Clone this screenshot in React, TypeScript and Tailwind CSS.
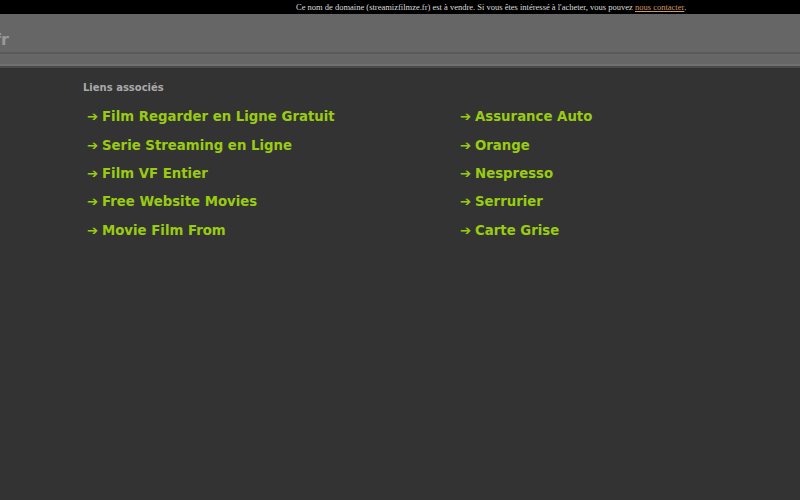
import React from 'react';

const leftLinks = [
  'Film Regarder en Ligne Gratuit',
  'Serie Streaming en Ligne',
  'Film VF Entier',
  'Free Website Movies',
  'Movie Film From',
];

const rightLinks = ['Assurance Auto', 'Orange', 'Nespresso', 'Serrurier', 'Carte Grise'];

function LinkItem({ label }: { label: string }) {
  return (
    <li className="h-[28.4px] flex items-center">
      <a href="#" className="flex items-center text-[13.3px] font-bold text-[#99cc11] no-underline">
        <span className="w-[15px] pl-[4px]">➔</span>
        <span className="pl-[4px]">{label}</span>
      </a>
    </li>
  );
}

export default function App() {
  return (
    <div className="w-[800px] h-[500px] bg-[#333333] overflow-hidden font-['DejaVu_Sans',sans-serif]">
      {/* sale notice */}
      <div className="h-[14px] bg-black flex items-center pl-[296px] text-[8.5px] leading-none text-[#dddddd] font-['Liberation_Serif',serif] whitespace-nowrap">
        Ce nom de domaine (streamizfilmze.fr) est à vendre. Si vous êtes intéressé à l'acheter, vous pouvez&nbsp;
        <a href="#" className="underline text-[#cc9966]">nous contacter</a>.
      </div>

      {/* header */}
      <div className="h-[38px] bg-[#666666] overflow-hidden flex items-end pb-[4px]">
        <span className="ml-[-6px] text-[16px] font-bold text-[#999999] leading-none">fr</span>
      </div>
      <div className="h-[2px] bg-[#5a5a5a]" />
      <div className="h-[10px] bg-[#666666]" />
      <div className="h-[2px] bg-[#707070]" />
      <div className="h-[2px] bg-[#4a4a4a]" />

      {/* related links */}
      <div className="pl-[83px] pt-[15px]">
        <h2 className="text-[10px] font-bold text-[#aaaaaa] leading-none">Liens associés</h2>
        <div className="flex mt-[10px]">
          <ul className="w-[373px]">
            {leftLinks.map((l) => (
              <LinkItem key={l} label={l} />
            ))}
          </ul>
          <ul>
            {rightLinks.map((l) => (
              <LinkItem key={l} label={l} />
            ))}
          </ul>
        </div>
      </div>
    </div>
  );
}
